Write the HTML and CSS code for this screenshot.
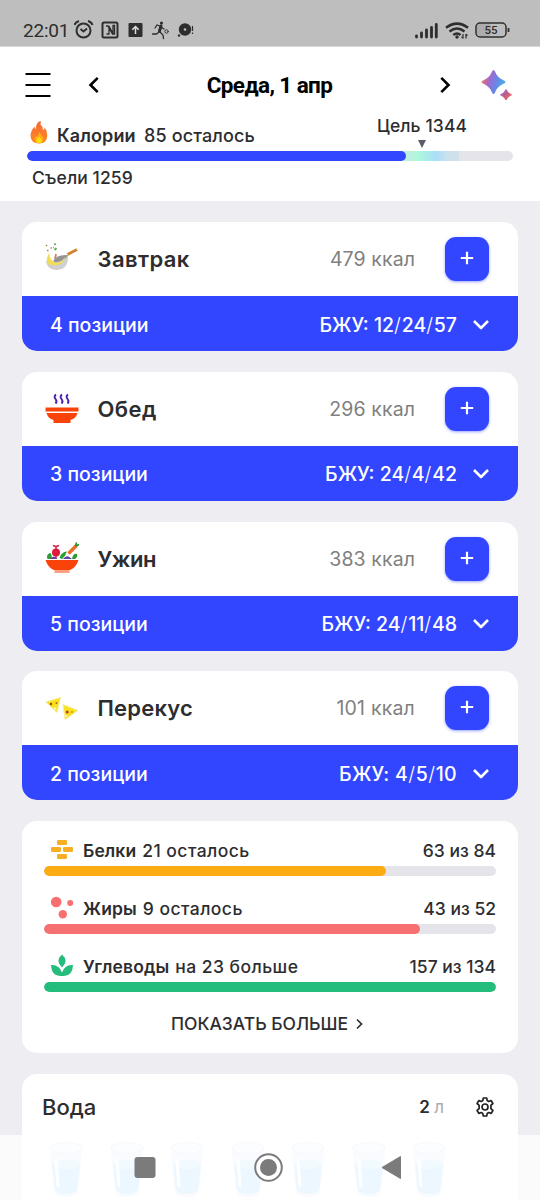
FILE: index.html
```html
<!DOCTYPE html>
<html lang="ru">
<head>
<meta charset="utf-8">
<title>Дневник питания</title>
<link rel="stylesheet" href="styles.css">
</head>
<body>
<svg class="defs" width="0" height="0">
  <defs>
    <linearGradient id="spark" x1="0" y1="0.3" x2="1" y2="0.6"><stop offset="0" stop-color="#ff7a45"/><stop offset=".3" stop-color="#a868c8"/><stop offset=".6" stop-color="#6b83e6"/><stop offset="1" stop-color="#45b4ea"/></linearGradient>
    <linearGradient id="spark2" x1="0" y1="0" x2="1" y2="1"><stop offset="0" stop-color="#7a6ce0"/><stop offset=".5" stop-color="#c85a88"/><stop offset="1" stop-color="#f07048"/></linearGradient>
    <linearGradient id="fire" x1="0" y1="0" x2="0" y2="1"><stop offset="0" stop-color="#f4693c"/><stop offset="1" stop-color="#ff8a1c"/></linearGradient>
    <symbol id="chev" viewBox="0 0 18 12"><path d="M2 2l7 7 7-7" fill="none" stroke="#fff" stroke-width="2.600" stroke-linejoin="round"/></symbol>
    <symbol id="glass" viewBox="0 0 34 58">
      <path d="M.5 6L5 50Q5.500 56 17 56Q28.500 56 29 50L33.500 6Z" fill="#ebeffa"/>
      <path d="M3 24L5.500 47Q6 53 17 53Q28 53 28.500 47L31 24Z" fill="#b5e0fd"/>
      <ellipse cx="17" cy="23.500" rx="14" ry="4.500" fill="#c7effd"/>
      <ellipse cx="17" cy="7" rx="16" ry="5.500" fill="#f3f5fd" stroke="#dfe5f2"/>
      <path d="M7 19L9 45" stroke="#fff" stroke-width="3" stroke-linecap="round"/>
    </symbol>
  </defs>
</svg>

<div class="status">
  <span class="clock">22:01</span>
  <svg class="status-icons" width="124" height="22" viewBox="0 0 124 22">
    <g fill="none" stroke="#2e2e2e" stroke-width="2">
      <circle cx="9.500" cy="11.500" r="7"/><path d="M6.500 10l3 2.500 3.500-3M.5 6Q1.500 3 5 2M18.500 6Q17.500 3 14 2"/>
      <rect x="28.500" y="3.500" width="15" height="15" rx="1.500"/>
      <path d="M32.500 15h2.500V7l4 7.500V6.500h1.500V15h-2L34 7h-2" stroke-width="1.300"/>
    </g>
    <rect x="54.500" y="4" width="14" height="14" rx="1" fill="#2e2e2e"/>
    <path d="M61.500 15V8M58.300 10.800L61.500 7.500l3.200 3.300" fill="none" stroke="#ddd" stroke-width="1.500"/>
    <g fill="none" stroke="#2e2e2e" stroke-linecap="round">
      <path d="M87 7l-1.500 5" stroke-width="3"/><path d="M85 13l-2.500 2h-4M86 13l3 3 .5 3.500M86 7l-3-1-2 3M87 8l3 2" stroke-width="1.300"/>
      <circle cx="92.500" cy="12.500" r="1.700" stroke-width=".9"/>
    </g>
    <circle cx="87.500" cy="4" r="1.600" fill="#2e2e2e"/>
    <circle cx="111" cy="10.500" r="6.200" fill="#2e2e2e"/><circle cx="111" cy="10.500" r="1.300" fill="#bebebe"/><circle cx="105" cy="16.500" r="1.200" fill="#2e2e2e"/>
    <path d="M118.500 7v5M118.500 13.500v1.500" stroke="#2e2e2e" stroke-width="1.200"/>
  </svg>
  <svg class="status-right" width="98" height="22" viewBox="0 0 98 22">
    <path d="M2.500 18v-1M7.500 18v-4M12.500 18v-7M17.500 18v-9.500M22.300 18V5.500" stroke="#2e2e2e" stroke-width="2.800" stroke-linecap="round"/>
    <g fill="none" stroke="#2e2e2e" stroke-width="2.500"><path d="M32 8.800Q43 .5 54 8.800M35.500 12.500Q43 6.500 50.500 12.500M39.300 16Q43 13 46.500 16"/></g>
    <circle cx="43" cy="18" r="1.700" fill="#2e2e2e"/><path d="M49 15v4.500M47.500 17.800l1.500 1.500M52 19.500V15M52 15.200l1.500 1.500" stroke="#2e2e2e" stroke-width="1.200"/>
    <rect x="63" y="5" width="14" height="12" rx="3" fill="#acacac"/>
    <rect x="62" y="4" width="30" height="14" rx="4" fill="none" stroke="#2e2e2e" stroke-width="1.500"/>
    <path d="M94.500 9v4" stroke="#2e2e2e" stroke-width="1.800"/>
    <text x="77" y="15.200" text-anchor="middle" class="bat">55</text>
  </svg>
</div>

<header class="header">
  <div class="nav">
    <svg class="burger" width="26" height="28" viewBox="0 0 26 28"><path d="M.5 3h25M.5 14h25M.5 25h25" stroke="#000" stroke-width="2.200"/></svg>
    <svg class="prev" width="12" height="18" viewBox="0 0 12 18"><path d="M9.700 1.800L2.500 9l7.200 7.200" fill="none" stroke="#000" stroke-width="2.600"/></svg>
    <h1 class="title">Среда, 1 апр</h1>
    <svg class="next" width="12" height="18" viewBox="0 0 12 18"><path d="M2.300 1.800L9.500 9l-7.200 7.200" fill="none" stroke="#000" stroke-width="2.600"/></svg>
    <svg class="sparkles" width="32" height="32" viewBox="0 0 32 32">
      <path d="M12.500 1Q13.700 1 14.500 3.500Q16.500 8.500 22 11Q24.500 12.200 24.500 13Q24.500 13.800 22 15Q16.500 17.500 14.500 22.500Q13.700 25 12.500 25Q11.300 25 10.500 22.500Q8.500 17.500 3 15Q.5 13.800 .5 13Q.5 12.200 3 11Q8.500 8.500 10.500 3.500Q11.300 1 12.500 1Z" fill="url(#spark)"/>
      <path d="M25 20.500Q26.500 24.500 30.500 25.800Q26.500 27.500 25 31Q23.500 27.500 19.500 25.800Q23.500 24.500 25 20.500Z" fill="url(#spark2)" stroke="url(#spark2)" stroke-linejoin="round"/>
    </svg>
  </div>
  <div class="cal-head">
    <svg width="18" height="23" viewBox="0 0 18 23"><path d="M9 .5Q5.500 3 6 8Q4.500 7.500 4.500 5.500Q.5 10 .5 15Q1 22.500 9 22.500Q17 22.500 17.300 14.500Q17.300 10 14.800 6.500Q14.500 8.500 12.800 9Q12.800 5 10.500 3.500Q10.800 1.500 11 .2Z" fill="url(#fire)"/><path d="M9 11Q12 14 13.500 17.500Q13.500 22 9 22Q4.500 22 4.500 17.500Q5.500 14.500 7 15.500Q9 14 9 11Z" fill="#ffa91e"/><path d="M9 15.500Q12 18 12 20Q11 22.300 9 22.300Q6.500 22.300 6 20Q6.500 18 9 15.500Z" fill="#ffd90a"/></svg>
    <b class="cal-name">Калории</b><span class="cal-left">85 осталось</span>
    <div class="goal"><span>Цель 1344</span><i class="pointer"></i></div>
  </div>
  <div class="track cal-track"><div class="fill cal-fill"></div><div class="zone"></div></div>
  <div class="eaten">Съели 1259</div>
</header>

<main class="feed">
  <section class="meal">
    <div class="meal-top">
      <svg class="meal-icon" width="34" height="34" viewBox="0 0 34 34">
        <path d="M1 19Q10 23 19 15L23 13Q24 27 12 28Q3 28 1 20Z" fill="#cfcfcf"/><path d="M8 19Q12 12 23 13Q20 19 10 20.500Z" fill="#949494"/><path d="M22.500 12.500L32 7.500" stroke="#cf842d" stroke-width="2.800"/>
        <path d="M2 21Q1 17 4 11Q5 18 9 20Q13 22 17 19L20 15Q19 21 14 22.500Q6 25 2 21Z" fill="#f0dc58"/><path d="M11 12l-1 5" stroke="#c78662" stroke-width="1.800"/><path d="M9 2l2 .5M9.500 8l2-2" stroke="#66a84b" stroke-width="1.800"/><path d="M1 3l1 1M2 8.500h1.500M5.500 6h1.300M8 5.500h.8" stroke="#a58337" stroke-width="1.500"/>
      </svg>
      <h2 class="t1">Завтрак</h2><span class="kcal">479 ккал</span><button class="add" aria-label="Добавить"><svg width="14" height="14" viewBox="0 0 14 14"><path d="M7 .8v12.400M.8 7h12.400" stroke="#fff" stroke-width="2.200"/></svg></button>
    </div>
    <div class="meal-bar"><span class="pos">4 позиции</span><span class="bju">БЖУ: 12<i>/</i>24<i>/</i>57</span><svg width="18" height="12"><use href="#chev"/></svg></div>
  </section>
  <section class="meal">
    <div class="meal-top">
      <svg class="meal-icon" width="34" height="34" viewBox="0 0 34 34">
        <path d="M11 2.500Q8.500 4.500 10.500 7T10.500 11.500M17 2.500Q14.500 4.500 16.500 7T16.500 11.500M23 2.500Q20.500 4.500 22.500 7T22.500 11.500" fill="none" stroke="#4d22ac" stroke-width="1.900"/>
        <path d="M.5 15.500h33v4h-33ZM1.500 21h31Q31 26.500 25.500 28v3h-17v-3Q3 26.500 1.500 21Z" fill="#fa430b"/>
      </svg>
      <h2 class="t2">Обед</h2><span class="kcal">296 ккал</span><button class="add" aria-label="Добавить"><svg width="14" height="14" viewBox="0 0 14 14"><path d="M7 .8v12.400M.8 7h12.400" stroke="#fff" stroke-width="2.200"/></svg></button>
    </div>
    <div class="meal-bar"><span class="pos">3 позиции</span><span class="bju">БЖУ: 24<i>/</i>4<i>/</i>42</span><svg width="18" height="12"><use href="#chev"/></svg></div>
  </section>
  <section class="meal">
    <div class="meal-top">
      <svg class="meal-icon" width="34" height="34" viewBox="0 0 34 34">
        <path d="M2.500 17Q1 13 4 11.500Q6 10 6.500 13L7 17ZM14.500 16Q16 10 22 9.500Q20.500 14 17 17ZM27 17Q28 11 32 12Q33 15 30 17Z" fill="#2c9d34"/>
        <circle cx="11" cy="10.500" r="4" fill="#e0193c"/><path d="M11 7V4.500L8 3.500M11 4.500l3-1M11 14v3" stroke="#d11b40" stroke-width="1.500" fill="none"/>
        <path d="M5 17q4-5 7 0M18 17q4-5.500 9 0Z" fill="#6742a6"/><path d="M24.500 10.500L30.500 4.500" stroke="#f06c26" stroke-width="3.600" stroke-linecap="round"/><path d="M30.500 4l1-3.500M31 4l3-1.500" stroke="#238d2c" stroke-width="1.600"/>
        <path d="M.5 18h33Q31 26 24 28.500H10Q3 26 .5 18Z" fill="#fa430b"/><path d="M9.500 30h15" stroke="#fa430b" stroke-width="1.200"/>
      </svg>
      <h2 class="t3">Ужин</h2><span class="kcal">383 ккал</span><button class="add" aria-label="Добавить"><svg width="14" height="14" viewBox="0 0 14 14"><path d="M7 .8v12.400M.8 7h12.400" stroke="#fff" stroke-width="2.200"/></svg></button>
    </div>
    <div class="meal-bar"><span class="pos">5 позиции</span><span class="bju">БЖУ: 24<i>/</i>11<i>/</i>48</span><svg width="18" height="12"><use href="#chev"/></svg></div>
  </section>
  <section class="meal">
    <div class="meal-top">
      <svg class="meal-icon" width="34" height="34" viewBox="0 0 34 34">
        <path d="M.8 11L15.500 6.500L12 21.500ZM18 13.500L33 19.500L20 28.500Z" fill="#f8e11f" stroke="#f5ed9c"/>
        <circle cx="6" cy="13" r="1.200" fill="#a23c1e"/><circle cx="11.500" cy="12" r="1" fill="#b66418"/><circle cx="22.200" cy="21" r="1.500" fill="#c43c1e"/><circle cx="27" cy="21" r=".8" fill="#b66418"/><circle cx="10" cy="17.500" r="1.500" fill="#fff2a8"/><circle cx="21" cy="25" r="1.300" fill="#fff2a8"/>
      </svg>
      <h2 class="t4">Перекус</h2><span class="kcal k4">101 ккал</span><button class="add" aria-label="Добавить"><svg width="14" height="14" viewBox="0 0 14 14"><path d="M7 .8v12.400M.8 7h12.400" stroke="#fff" stroke-width="2.200"/></svg></button>
    </div>
    <div class="meal-bar"><span class="pos">2 позиции</span><span class="bju b4">БЖУ: 4<i>/</i>5<i>/</i>10</span><svg width="18" height="12"><use href="#chev"/></svg></div>
  </section>

  <section class="macros">
    <div class="macro">
      <div class="macro-head"><svg width="24" height="24" viewBox="0 0 24 24" fill="#f7b024"><rect x="7" y="2" width="10" height="5" rx="1.300"/><rect x="1" y="9" width="10" height="5" rx="1.300"/><rect x="13" y="9" width="10" height="5" rx="1.300"/><rect x="7" y="16" width="10" height="5" rx="1.300"/></svg><b class="m1">Белки</b><span class="left">21 осталось</span><span class="amount">63 из 84</span></div>
      <div class="track"><div class="fill" style="width:75.6%;background:#fdab13"></div></div>
    </div>
    <div class="macro">
      <div class="macro-head"><svg width="24" height="24" viewBox="0 0 24 24" fill="#f77071"><circle cx="6.200" cy="6" r="5.300"/><circle cx="20.200" cy="7" r="3"/><circle cx="12.800" cy="18.300" r="4.200"/></svg><b class="m2">Жиры</b><span class="left">9 осталось</span><span class="amount">43 из 52</span></div>
      <div class="track"><div class="fill" style="width:83.2%;background:#f77071"></div></div>
    </div>
    <div class="macro">
      <div class="macro-head"><svg width="24" height="24" viewBox="0 0 24 24" fill="#25bd7c"><path d="M12 .5Q19 6.500 12 13.500Q5 6.500 12 .5ZM1 11Q9 10 12 18.500Q15 10 23 11Q22.500 22 14 22H10Q1.500 22 1 11Z"/></svg><b class="m3">Углеводы</b><span class="left">на 23 больше</span><span class="amount">157 из 134</span></div>
      <div class="track"><div class="fill" style="width:100%;background:#25bd7c"></div></div>
    </div>
    <div class="more"><span>ПОКАЗАТЬ БОЛЬШЕ</span><svg width="7" height="12" viewBox="0 0 7 12"><path d="M1 1.500L5.500 6 1 10.500" fill="none" stroke="#2d2d2f" stroke-width="1.700"/></svg></div>
  </section>

  <section class="water">
    <div class="water-head"><h3>Вода</h3><span class="litres">2 <span>л</span></span>
      <svg width="20" height="20" viewBox="0 0 20 20" fill="none" stroke="#222" stroke-width="1.700" stroke-linejoin="round"><path d="M8.300 1h3.400l.5 2.600 1.500.9 2.500-.9 1.700 2.900-2 1.800v3.400l2 1.800-1.700 2.900-2.500-.9-1.500.9-.5 2.600H8.300l-.5-2.600-1.500-.9-2.500.9-1.700-2.900 2-1.800V8.300l-2-1.800 1.700-2.900 2.500.9 1.500-.9Z"/><circle cx="10" cy="10" r="3"/></svg>
    </div>
    <div class="glasses">
      <svg><use href="#glass"/></svg><svg><use href="#glass"/></svg><svg><use href="#glass"/></svg><svg><use href="#glass"/></svg><svg><use href="#glass"/></svg><svg><use href="#glass"/></svg><svg><use href="#glass"/></svg>
    </div>
  </section>
</main>

<div class="sysnav">
  <svg width="540" height="65" viewBox="0 0 540 65" fill="#7b7b7b"><rect x="134.500" y="22" width="21" height="21" rx="3"/><circle cx="268.500" cy="32.500" r="13.300" fill="#fff" stroke="#7b7b7b" stroke-width="2"/><circle cx="268.500" cy="32.500" r="8.500"/><path d="M382 32.500L400.500 21.500V43.500Z" stroke="#7b7b7b" stroke-linejoin="round"/></svg>
</div>
</body>
</html>
```
FILE: styles.css
```css
* { box-sizing: border-box; }
body { margin: 0; width: 540px; height: 1200px; overflow: hidden; background: #eeedf2; color: #2d2d2f; font-family: Inter, sans-serif; font-weight: 500; position: relative; }
h1, h2, h3 { margin: 0; }
svg { display: block; flex: none; }
span, b, h1, h2, h3 { white-space: nowrap; }
.defs { position: absolute; }

.status { height: 47px; padding: 19px 28px 0 23px; background: #bebebe; border-bottom: 1px solid #d8d8d8; display: flex; align-items: flex-start; }
.clock { width: 51px; font: 400 19px/24px Roboto, sans-serif; letter-spacing: -.2px; color: #2e2e2e; }
.status-right { margin-left: auto; }
.bat { font: 500 11.500px Roboto, sans-serif; fill: #2e2e2e; }

.header { height: 154px; background: #fff; }
.nav { height: 76px; padding: 0 27px 0 25px; display: flex; align-items: center; }
.prev { margin-left: 37px; }
.title { width: 341px; text-align: center; font: 700 22.500px/30px Roboto, sans-serif; letter-spacing: -.6px; color: #000; }
.sparkles { margin-left: 30px; }
.cal-head { height: 27px; margin-top: -2px; padding: 0 0 0 30px; display: flex; align-items: flex-start; font-size: 18px; line-height: 29px; }
.cal-name { margin-left: 9px; width: 87px; font-weight: 600; letter-spacing: .1px; }
.cal-left { letter-spacing: .15px; }
.goal { width: 92px; margin-left: auto; margin-right: 72px; margin-top: -9px; display: flex; flex-direction: column; align-items: center; }
.goal span { font-size: 17.500px; line-height: 28px; letter-spacing: .1px; }
.pointer { border: 4px solid transparent; border-top: 8px solid #5c5a66; border-bottom: 0; }
.track { height: 10px; border-radius: 5px; background: #e4e4ea; overflow: hidden; display: flex; }
.fill { height: 10px; border-radius: 5px; flex: none; }
.cal-track { margin: 3px 27px 0 27px; }
.cal-fill { width: 379px; background: #3346ff; z-index: 1; }
.zone { width: 58px; margin-left: -5px; background: linear-gradient(90deg, #cbeae4, #aef8dd 30%, #a8dff8 60%, #cce1ed 80%, #cfe1ea); }
.eaten { margin: 3px 0 0 32px; font-size: 17.500px; line-height: 28px; letter-spacing: .1px; }

.feed { padding: 21px 22px 0; display: flex; flex-direction: column; gap: 20.800px; }
.meal { height: 129px; background: #fff; border-radius: 15px; overflow: hidden; flex: none; }
.meal-top { height: 74px; padding: 0 29px 0 23px; display: flex; align-items: center; }
h2 { margin-left: 18.500px; font-size: 22px; font-weight: 600; line-height: 30px; }
.t1 { letter-spacing: .4px; }
.t2 { letter-spacing: .4px; }
.t3 { letter-spacing: -.5px; }
.t4 { letter-spacing: .2px; }
.kcal { margin-left: auto; margin-right: 30px; font-size: 19.500px; letter-spacing: .1px; color: #808080; font-weight: 400; }
.k4 { letter-spacing: .2px; }
.add { width: 44px; height: 44px; padding: 0 0 2px; border: 0; border-radius: 11px; background: #3346ff; display: flex; align-items: center; justify-content: center; box-shadow: 0 1px 3px #3346ff80; }
.meal-bar { height: 55px; padding: 2px 28px 0; background: #3346ff; color: #fff; font-size: 19.500px; display: flex; align-items: center; }
.bju { margin-left: auto; margin-right: 15px; }
.bju i { font-style: normal; font-weight: 300; letter-spacing: .8px; }
.b4 { letter-spacing: .3px; }

.macros { height: 232px; padding: 17px 22px 0; background: #fff; border-radius: 15px; flex: none; font-size: 17.500px; }
.macro { height: 57.700px; }
.macro-head { height: 28px; padding-left: 6px; display: flex; align-items: flex-start; line-height: 26px; }
.macro-head b { margin-left: 9px; margin-right: 6px; font-weight: 600; letter-spacing: .1px; }
.left { letter-spacing: .45px; }
.amount { margin-left: auto; }
.more { height: 25px; padding-right: 6px; display: flex; align-items: center; justify-content: center; gap: 8px; }

.water { height: 160px; background: #fff; border-radius: 15px; flex: none; }
.water-head { height: 66px; padding: 0 23px 0 20px; display: flex; align-items: center; }
h3 { font-size: 22px; font-weight: 500; padding-top: 1px; }
.litres { margin-left: auto; margin-right: 31px; font-size: 17px; font-weight: 600; }
.litres span { color: #aaaab0; font-weight: 400; }
.glasses { display: flex; gap: 26.500px; padding: 1px 0 0 27px; }
.glasses svg { width: 34px; height: 58px; }
.sysnav { position: absolute; left: 0; bottom: 0; width: 540px; height: 65px; background: rgba(255,255,255,.75); }
```
